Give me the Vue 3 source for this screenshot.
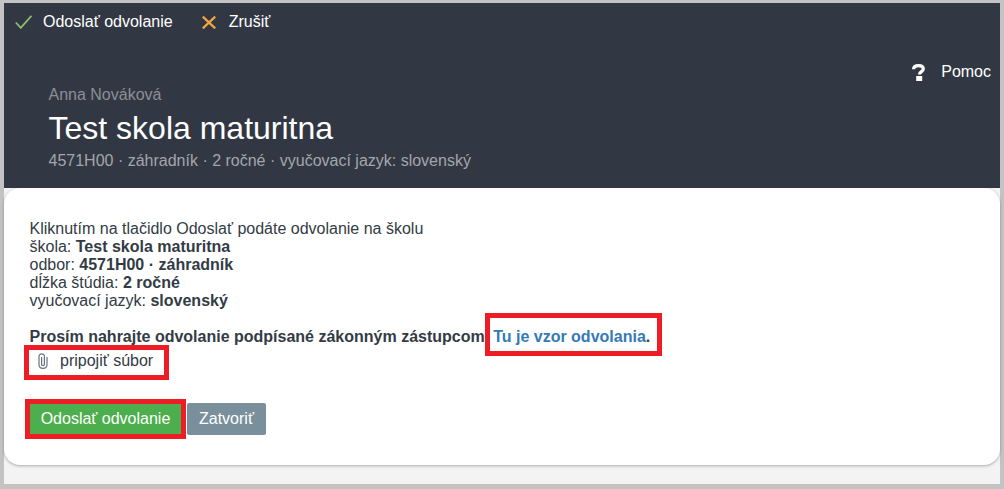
<script setup>
const details = [
  { label: 'škola:', value: 'Test skola maturitna' },
  { label: 'odbor:', value: '4571H00 · záhradník' },
  { label: 'dĺžka štúdia:', value: '2 ročné' },
  { label: 'vyučovací jazyk:', value: 'slovenský' },
]
</script>

<template>
  <div class="frame">
    <div class="page">
      <header class="header">
        <nav class="toolbar">
          <a class="tool">
            <svg class="tool-icon" viewBox="0 0 17 14" width="17" height="14" fill="none" stroke="#8dc06a" stroke-width="1.8">
              <path d="M0.8 7.5 L5.8 12.8 L16.4 0.8" />
            </svg>
            <span>Odoslať odvolanie</span>
          </a>
          <a class="tool tool-cancel">
            <svg class="tool-icon" viewBox="0 0 14 13" width="14" height="13" fill="none" stroke="#f5a640" stroke-width="2.2">
              <path d="M0.8 0.6 L13.2 12.4 M13.2 0.6 L0.8 12.4" />
            </svg>
            <span>Zrušiť</span>
          </a>
        </nav>
        <a class="help">
          <svg viewBox="0 0 13 17" width="13" height="17" fill="none">
            <path d="M1.6 5.2 C1.6 2.8 3.6 1.6 6.6 1.6 C9.6 1.6 11.3 3 11.3 5 C11.3 7.6 7.4 7.6 7.4 10.5" stroke="#fff" stroke-width="3.2" />
            <rect x="4.2" y="12" width="6" height="5" fill="#fff" />
          </svg>
          <span>Pomoc</span>
        </a>
        <div class="intro">
          <div class="person">Anna Nováková</div>
          <h1 class="title">Test skola maturitna</h1>
          <div class="meta">4571H00 · záhradník · 2 ročné · vyučovací jazyk: slovenský</div>
        </div>
      </header>
      <main class="card">
        <p class="lead">Kliknutím na tlačidlo Odoslať podáte odvolanie na školu</p>
        <p v-for="d in details" :key="d.label" class="lead">{{ d.label }} <b>{{ d.value }}</b></p>
        <p class="upload-note">
          <b>Prosím nahrajte odvolanie podpísané zákonným zástupcom.</b>
          <span class="marked-link"><a class="link">Tu je vzor odvolania</a><b>.</b></span>
        </p>
        <div class="attach">
          <svg viewBox="0 0 10 16" width="10" height="16" fill="none" stroke="#66727e" stroke-width="1.2">
            <path d="M3.6 4 V11.6 C3.6 13 6.4 13 6.4 11.6 V3 C6.4 0.2 1 0.2 1 3 V11.5 C1 16.6 9 16.6 9 11.5 V4" />
          </svg>
          <span>pripojiť súbor</span>
        </div>
        <div class="actions">
          <button class="btn btn-send">Odoslať odvolanie</button>
          <button class="btn btn-close">Zatvoriť</button>
        </div>
      </main>
    </div>
  </div>
</template>

<style scoped>
.frame {
  box-sizing: border-box;
  width: 1004px;
  height: 489px;
  padding: 3px 4px 5px;
  background: #c3c3c3;
  font-family: "Liberation Sans", Arial, sans-serif;
  font-size: 16px;
  color: #333b45;
}
.page {
  height: 481px;
  background: #f3f3f3;
}
.header {
  height: 185px;
  background: #323843;
  position: relative;
  color: #fff;
}
.toolbar {
  display: flex;
  height: 37px;
  padding-left: 11px;
  align-items: center;
  gap: 29px;
}
.tool {
  display: flex;
  align-items: center;
  gap: 11px;
}
.tool-cancel {
  gap: 13px;
}
.tool-icon {
  display: block;
  margin-top: 1px;
}
.help {
  position: absolute;
  top: 60px;
  right: 9px;
  display: flex;
  align-items: center;
  gap: 16px;
}
.intro {
  padding: 47px 0 0 44.5px;
}
.person {
  line-height: 16px;
  color: #8b8f96;
}
.title {
  margin: 7px 0 0;
  font-size: 32px;
  line-height: 36px;
  font-weight: 400;
}
.meta {
  margin-top: 6px;
  line-height: 18px;
  color: #a3a6ab;
}
.card {
  box-sizing: border-box;
  height: 277px;
  padding: 32px 26px 0;
  background: #fff;
  border-radius: 16px;
  box-shadow: 0 1px 3px rgba(0, 0, 0, 0.3);
}
.lead {
  margin: 0 0 0 -0.5px;
  line-height: 18px;
}
.upload-note {
  margin: 18px 0 0 -0.5px;
  line-height: 18px;
}
.marked-link {
  position: relative;
  margin-left: 4px;
}
.marked-link::after {
  content: "";
  position: absolute;
  left: -8px;
  right: -12px;
  top: -15px;
  bottom: -11px;
  border: 5px solid #ee1c25;
  pointer-events: none;
}
.link {
  font-weight: 700;
  color: #337ab7;
}
.attach {
  display: flex;
  width: max-content;
  height: 24px;
  align-items: center;
  gap: 12px;
  padding-left: 8px;
  margin-top: 3px;
  position: relative;
}
.attach::after {
  content: "";
  position: absolute;
  left: -6px;
  right: -16px;
  top: -4px;
  bottom: -7px;
  border: 5px solid #ee1c25;
  pointer-events: none;
}
.actions {
  display: flex;
  gap: 5px;
  margin-top: 30px;
  margin-left: -1px;
}
.btn {
  height: 32px;
  padding: 0 12px;
  border: 0;
  border-radius: 2px;
  color: #fff;
  font-family: inherit;
  font-size: 16px;
}
.btn-send {
  width: 153px;
  padding: 0;
  background: #4cae4c;
  position: relative;
}
.btn-send::after {
  content: "";
  position: absolute;
  inset: -4px;
  border: 5px solid #ee1c25;
  pointer-events: none;
}
.btn-close {
  background: #7a8f9c;
}
</style>
